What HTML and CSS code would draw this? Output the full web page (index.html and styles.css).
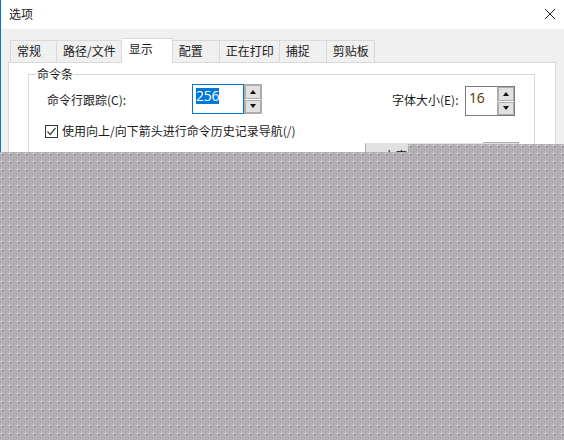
FILE: index.html
```html
<!DOCTYPE html>
<html lang="zh-CN">
<head>
    <meta charset="UTF-8">
    <title>选项</title>
    <link rel="stylesheet" href="styles.css">
</head>
<body>
    <div class="window">
        <div class="titlebar">
            <span>选项</span>
            <svg class="close" width="10" height="10" viewBox="0 0 10 10"><path d="M0 0L10 10M10 0L0 10" stroke="#222" fill="none"/></svg>
        </div>
        <div class="content">
            <div class="tabs">
                <div class="tab">常规</div>
                <div class="tab">路径/文件</div>
                <div class="tab active">显示</div>
                <div class="tab">配置</div>
                <div class="tab">正在打印</div>
                <div class="tab">捕捉</div>
                <div class="tab">剪贴板</div>
            </div>
            <div class="panel">
                <fieldset class="group">
                    <legend>命令条</legend>
                    <div class="row-track">
                        <label class="track-label">命令行跟踪(C):</label>
                        <div class="spin focused">
                            <div class="spin-value"><span class="selected">256</span></div>
                            <div class="spin-buttons">
                                <div class="spin-btn"><i class="tri-up"></i></div>
                                <div class="spin-btn"><i class="tri-down"></i></div>
                            </div>
                        </div>
                        <label class="font-label">字体大小(E):</label>
                        <div class="spin">
                            <div class="spin-value">16</div>
                            <div class="spin-buttons">
                                <div class="spin-btn"><i class="tri-up"></i></div>
                                <div class="spin-btn"><i class="tri-down"></i></div>
                            </div>
                        </div>
                    </div>
                    <div class="row-check">
                        <svg class="check" width="13" height="13" viewBox="0 0 13 13"><rect x="0.5" y="0.5" width="12" height="12" fill="#fff" stroke="#333"/><path d="M2.5 6.5L5.2 9.5L10.5 3" fill="none" stroke="#444" stroke-width="1.2"/></svg>
                        <span class="check-text">使用向上/向下箭头进行命令历史记录导航(/)</span>
                    </div>
                    <div class="row-buttons">
                        <div class="check-empty"></div>
                        <button class="btn btn-wide">自定义</button>
                        <button class="btn btn-small"></button>
                    </div>
                </fieldset>
            </div>
        </div>
        <!-- dotted cover over the rest of the dialog -->
        <svg class="cover" width="564" height="440" viewBox="0 0 564 440">
            <defs>
                <pattern id="dots" x="0" y="0" width="8" height="8" patternUnits="userSpaceOnUse">
                    <rect width="8" height="8" fill="#b2aeb2"/>
                    <rect x="1" y="1" width="1" height="1" fill="#fff"/>
                    <rect x="2" y="2" width="1" height="1" fill="#605d63"/>
                    <rect x="2" y="1" width="1" height="1" fill="#c8c6c8"/>
                    <rect x="1" y="2" width="1" height="1" fill="#c8c6c8"/>
                </pattern>
            </defs>
            <path d="M408 144H564V440H0V152H408Z" fill="url(#dots)"/>
        </svg>
    </div>
</body>
</html>
```

FILE: styles.css
```css
body {
    margin: 0;
    font-family: "Noto Sans CJK SC", "Liberation Sans", sans-serif;
    font-size: 12px;
    color: #1a1a1a;
}

.window {
    position: relative;
    width: 564px;
    height: 440px;
    box-sizing: border-box;
    padding-left: 1px;
    background: linear-gradient(#0078d7, #0078d7) left top / 1px 100% no-repeat #f0f0f0; /* blue window edge */
    overflow: hidden;
}

.titlebar {
    height: 29px;
    background-color: #fff;
    display: flex;
    justify-content: space-between;
    align-items: center;
    padding: 0 9px 2px 8px;
    box-sizing: border-box;
    line-height: 24px;
}

.content {
    padding: 0 8px 0 7px;
}

.tabs {
    display: flex;
    align-items: flex-end;
    height: 33px;
    padding-left: 2px;
}

.tab {
    min-width: 47px;
    height: 22px;
    line-height: 20px;
    box-sizing: border-box;
    padding: 0 5px 0 6px;
    border: 1px solid #d9d9d9;
    border-bottom: none;
    border-left-width: 0;
    background-color: #f0f0f0;
}

.tab:first-child {
    border-left-width: 1px;
}

.tab.active {
    min-width: 51px;
    height: 25px;
    line-height: 20px;
    padding-left: 7px;
    background-color: #fff;
    margin-bottom: -1px;
    position: relative;
}

.panel {
    border: 1px solid #d9d9d9;
    background-color: #fff;
    height: 340px;
    padding: 3px 20px 0 19px;
}

.group {
    margin: 0;
    padding: 0 0 0 16px;
    border: 1px solid #d9d9d9;
    height: 300px;
}

.group legend {
    margin-left: -9px;
    padding: 0 1px;
    line-height: 16px;
}

.row-track {
    display: flex;
    align-items: flex-start;
    padding-top: 2px;
}

.track-label {
    width: 145px;
    margin-top: 7px;
    margin-left: 2px;
}

.font-label {
    margin-left: 130px;
    margin-top: 7px;
    width: 73px;
}

.spin {
    display: flex;
    width: 50px;
    height: 30px;
    box-sizing: border-box;
    border: 1px solid #7a7a7a;
    margin-top: 2px;
    background-color: #fff;
}

.spin.focused {
    width: 70px;
    margin-top: 0;
    border: none;
}

.spin-value {
    flex: 1;
    padding: 1px 0 0 3px;
    font-family: "Open Sans", "Liberation Sans", sans-serif;
    font-size: 14px;
    letter-spacing: -0.3px;
    line-height: 20px;
    color: #5a3000;
}

.spin.focused .spin-value {
    padding-top: 0;
    border: 1px solid #0078d7;
    color: #fff;
}

.selected {
    display: inline-block;
    background-color: #0078d7;
    height: 16px;
    line-height: 16px;
    vertical-align: top;
    margin-top: 3px;
}

.spin-buttons {
    width: 16px;
    display: flex;
    flex-direction: column;
    gap: 1px;
    background-color: #fff;
    border-left: 1px solid #adadad;
}

.spin.focused .spin-buttons {
    border: 1px solid #adadad;
}

.spin-btn {
    flex: 1;
    background-color: #e1e1e1;
    border: 1px solid #adadad;
    display: flex;
    align-items: center;
    justify-content: center;
}

.tri-up {
    border: 3px solid transparent;
    border-top: none;
    border-bottom: 4px solid #111;
}

.tri-down {
    border: 3px solid transparent;
    border-bottom: none;
    border-top: 4px solid #111;
}

.row-check {
    display: flex;
    align-items: center;
    gap: 4px;
    height: 18px;
    margin-top: 6px;
}

.check {
    flex: none;
}

.check-text {
    margin-top: -2px;
}

.row-buttons {
    display: flex;
    align-items: flex-start;
    margin-top: 2px;
}

.check-empty {
    width: 13px;
    height: 13px;
    box-sizing: border-box;
    border: 1px solid #333;
    margin-top: 11px;
    margin-right: 307px;
}

.btn {
    height: 24px;
    font: inherit;
    padding: 0;
    background-color: #e1e1e1;
    border: 1px solid #adadad;
    border-top-color: #e1e1e1;
    border-right: none;
}

.btn-wide {
    width: 118px;
    color: #111;
    margin-top: 1px;
    padding-right: 46px;
    line-height: 20px;
    padding-top: 1px;
}

.btn-small {
    width: 36px;
    border-top-color: #adadad;
    border-right: 1px solid #adadad;
    border-left: none;
}

.cover {
    position: absolute;
    top: 0;
    left: 0;
}
```
